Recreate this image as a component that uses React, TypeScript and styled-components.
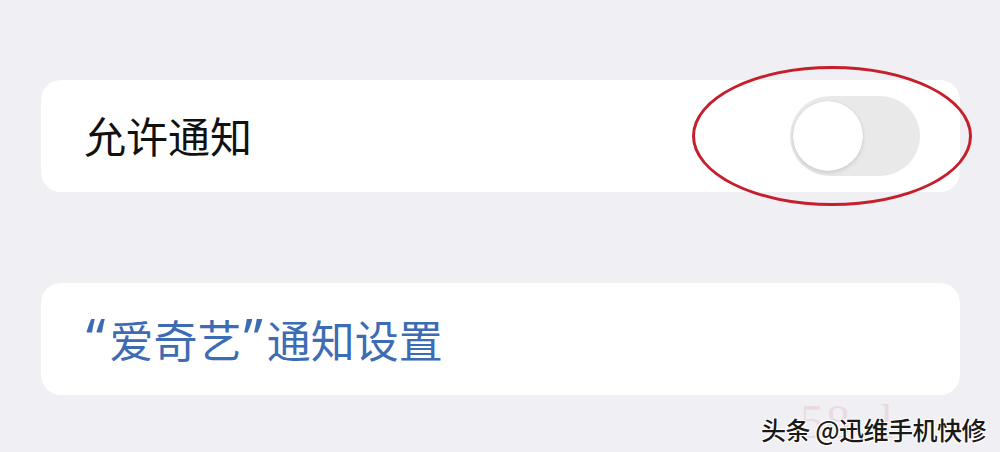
import React from "react";
import styled, { createGlobalStyle } from "styled-components";

const Global = createGlobalStyle`
  html, body { margin: 0; padding: 0; background: #efeff4; }
  body { font-family: "Noto Sans CJK SC", "Noto Sans", sans-serif; }
`;

const Page = styled.div`
  width: 1000px;
  height: 452px;
  box-sizing: border-box;
  padding: 80px 40px 0 41px;
  display: flex;
  flex-direction: column;
  gap: 91px;
  position: relative;
  overflow: hidden;
`;

const Card = styled.div`
  height: 112px;
  background: #ffffff;
  border-radius: 20px;
  display: flex;
  align-items: center;
  justify-content: space-between;
  padding: 0 40px 0 43px;
  box-sizing: border-box;
`;

const Label = styled.span<{ $link?: boolean }>`
  font-family: "Noto Sans CJK SC", sans-serif;
  font-size: ${(p) => (p.$link ? "44px" : "42px")};
  line-height: 1;
  color: ${(p) => (p.$link ? "#3d6cb5" : "#111111")};
  margin-top: ${(p) => (p.$link ? "0px" : "-2px")};
  display: flex;
  align-items: baseline;
`;

const Quote = styled.span`
  font-family: "Noto Sans", sans-serif;
  font-size: 54px;
  line-height: 0;
  margin: 0 4px 0 2px;
`;

const ToggleWrap = styled.div`
  position: relative;
  width: 130px;
  height: 80px;
`;

const Track = styled.div`
  width: 130px;
  height: 80px;
  border-radius: 40px;
  background: #e9e9ea;
  position: relative;
`;

const Knob = styled.div`
  position: absolute;
  left: 3px;
  top: 5px;
  width: 70px;
  height: 70px;
  border-radius: 50%;
  background: #ffffff;
  box-shadow: 0 2px 4px rgba(0, 0, 0, 0.12), 0 0 1px rgba(0, 0, 0, 0.15);
`;

const Ellipse = styled.div`
  position: absolute;
  left: -98px;
  top: -30px;
  width: 280px;
  height: 140px;
  box-sizing: border-box;
  border: 3px solid #c61f2c;
  border-radius: 50%;
  pointer-events: none;
`;

const Watermark = styled.div`
  position: absolute;
  right: 14px;
  bottom: 10px;
  font-family: "Noto Sans CJK SC", sans-serif;
  font-size: 25px;
  font-weight: 500;
  letter-spacing: -0.5px;
  line-height: 1;
  color: #1a1a1a;
  text-shadow: 1px 1px 0 #fff, -1px -1px 0 #fff, 1px -1px 0 #fff, -1px 1px 0 #fff;
`;

const Faint = styled.div`
  position: absolute;
  left: 800px;
  top: 398px;
  font-family: "Liberation Serif", serif;
  font-size: 48px;
  line-height: 1;
  color: rgba(220, 150, 160, 0.22);
  letter-spacing: 2px;
`;

export default function App() {
  return (
    <>
      <Global />
      <Page>
        <Card>
          <Label>允许通知</Label>
          <ToggleWrap>
            <Track>
              <Knob />
            </Track>
            <Ellipse />
          </ToggleWrap>
        </Card>
        <Card>
          <Label $link>
            <Quote>“</Quote>爱奇艺<Quote>”</Quote>通知设置
          </Label>
        </Card>
        <Faint>58 .l</Faint>
        <Watermark>头条 @迅维手机快修</Watermark>
      </Page>
    </>
  );
}
